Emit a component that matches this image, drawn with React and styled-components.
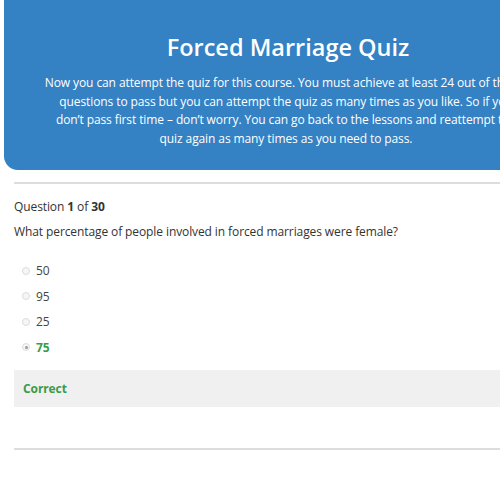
import styled, { createGlobalStyle } from "styled-components";

const GlobalStyle = createGlobalStyle`
  html, body {
    margin: 0;
    padding: 0;
    overflow: hidden;
    background: #ffffff;
  }

  body {
    font-family: "Segoe UI", "Open Sans", sans-serif;
    color: #333333;
    letter-spacing: -0.1px;
  }
`;

const Page = styled.div`
  width: 548px;
  padding: 0 0 0 14px;
`;

const Banner = styled.div`
  margin: -20px -10px 0;
  padding: 51px 0 21px;

  background: #3481c4;
  border-radius: 0 0 14px 14px;

  color: #ffffff;
  text-align: center;

  .title {
    margin: 0;

    font-size: 23.5px;
    font-weight: 600;
    line-height: 32px;
    letter-spacing: 0;
  }

  .intro {
    margin: 11px 0 0 -4px;

    font-size: 12px;
    line-height: 18.7px;
    white-space: nowrap;
  }
`;

const Rule = styled.div`
  height: 2px;
  background: #dddddd;
`;

const QuestionBlock = styled.div`
  padding-top: 13px;
  font-size: 12px;

  .count {
    line-height: 20px;
  }

  .text {
    margin-top: 5px;
    line-height: 20px;
  }
`;

const Options = styled.ul`
  list-style: none;
  margin: 16px 0 0;
  padding: 0 0 0 8px;
`;

const Option = styled.li`
  display: flex;
  align-items: center;
  gap: 6px;
  height: 25.6px;

  font-size: 12px;
  font-weight: ${(p) => (p.$correct ? 700 : 400)};
  color: ${(p) => (p.$correct ? "#3d9a44" : "#444444")};
`;

const Radio = styled.span`
  position: relative;
  width: 6px;
  height: 6px;

  border: 1px solid #dcdcdc;
  border-radius: 50%;
  background: #f6f6f6;

  &::after {
    content: "";
    display: ${(p) => (p.$checked ? "block" : "none")};
    position: absolute;
    top: 1.5px;
    left: 1.5px;
    width: 3px;
    height: 3px;
    border-radius: 50%;
    background: #999999;
  }
`;

const Feedback = styled.div`
  margin-top: 10px;
  padding: 0 9px;
  height: 37px;
  display: flex;
  align-items: center;

  background: #f0f0f0;

  font-size: 12px;
  font-weight: 700;
  color: #3d9a44;
`;

const Spacer = styled.div`
  height: 12px;
`;

const BottomRule = styled(Rule)`
  margin-top: 41px;
`;

const options = [
  { label: "50" },
  { label: "95" },
  { label: "25" },
  { label: "75", checked: true, correct: true },
];

const App = () => {
  return (
    <>
      <GlobalStyle />
      <Page>
        <Banner>
          <h1 className="title">Forced Marriage Quiz</h1>
          <p className="intro">
            Now you can attempt the quiz for this course. You must achieve at
            least 24 out of the 30
            <br />
            questions to pass but you can attempt the quiz as many times as you
            like. So if you
            <br />
            don’t pass first time – don’t worry. You can go back to the lessons
            and reattempt the
            <br />
            quiz again as many times as you need to pass.
          </p>
        </Banner>
        <Spacer />
        <Rule />
        <QuestionBlock>
          <div className="count">
            Question <b>1</b> of <b>30</b>
          </div>
          <div className="text">
            What percentage of people involved in forced marriages were female?
          </div>
        </QuestionBlock>
        <Options>
          {options.map((o) => (
            <Option key={o.label} $correct={o.correct}>
              <Radio $checked={o.checked} />
              {o.label}
            </Option>
          ))}
        </Options>
        <Feedback>Correct</Feedback>
        <BottomRule />
      </Page>
    </>
  );
};

export default App;
